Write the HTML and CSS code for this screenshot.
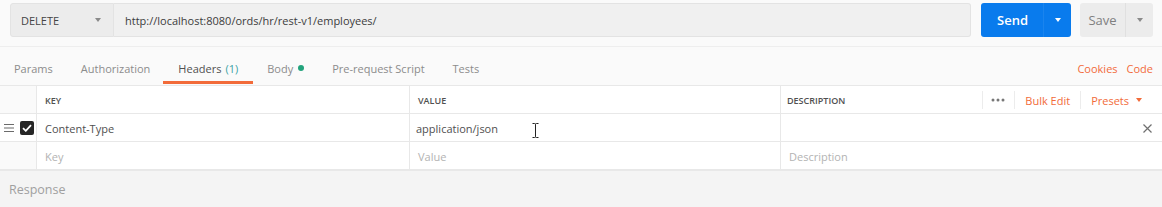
FILE: index.html
```html
<!DOCTYPE html>
<html>
<head>
<meta charset="utf-8">
<link rel="stylesheet" href="styles.css">
</head>
<body>
<div class="urlbar">
  <div class="method"><span>DELETE</span><span class="caret gray"></span></div>
  <div class="url">http://localhost:8080/ords/hr/rest-v1/employees/</div>
  <div class="send"><span class="send-label">Send</span><span class="send-drop"><span class="caret white"></span></span></div>
  <div class="save"><span class="save-label">Save</span><span class="save-drop"><span class="caret gray"></span></span></div>
</div>
<div class="tabsbar">
  <div class="tabs">
    <div class="tab">Params</div>
    <div class="tab">Authorization</div>
    <div class="tab active">Headers <span class="count">(1)</span></div>
    <div class="tab">Body <span class="dot"></span></div>
    <div class="tab">Pre-request Script</div>
    <div class="tab">Tests</div>
  </div>
  <div class="links"><span>Cookies</span><span>Code</span></div>
</div>
<div class="table">
  <div class="cell c0 head"></div>
  <div class="cell head">KEY</div>
  <div class="cell head">VALUE</div>
  <div class="cell head last desc-head">
    <span>DESCRIPTION</span>
    <div class="head-actions">
      <span class="act dots"><svg width="14" height="4" viewBox="0 0 14 4"><circle cx="2" cy="2" r="1.5" fill="#777"/><circle cx="7" cy="2" r="1.5" fill="#777"/><circle cx="12" cy="2" r="1.5" fill="#777"/></svg></span>
      <span class="act orange">Bulk Edit</span>
      <span class="act orange">Presets <span class="caret orange-caret"></span></span>
    </div>
  </div>

  <div class="cell c0 handle">
    <svg class="burger" width="10" height="8" viewBox="0 0 10 8"><path d="M0 0.5H10M0 4H10M0 7.5H10" stroke="#6b6b6b" stroke-width="1.2"/></svg>
    <span class="check"><svg width="10" height="8" viewBox="0 0 10 8"><path d="M1 4.2L3.8 6.8L9 1.2" fill="none" stroke="#fff" stroke-width="1.8"/></svg></span>
  </div>
  <div class="cell">Content-Type</div>
  <div class="cell value-cell">application/json<svg class="ibeam" width="7" height="15" viewBox="0 0 7 15"><path d="M0.5 0.5H2.5Q3.5 0.5 3.5 1.5V13.5Q3.5 14.5 2.5 14.5H0.5M6.5 0.5H4.5Q3.5 0.5 3.5 1.5M6.5 14.5H4.5Q3.5 14.5 3.5 13.5" fill="none" stroke="#222" stroke-width="1"/></svg></div>
  <div class="cell last del-cell"><svg width="9" height="9" viewBox="0 0 9 9"><path d="M0.5 0.5L8.5 8.5M8.5 0.5L0.5 8.5" stroke="#707070" stroke-width="1.2"/></svg></div>

  <div class="cell c0"></div>
  <div class="cell ph">Key</div>
  <div class="cell ph">Value</div>
  <div class="cell last ph">Description</div>
</div>
<div class="response">Response</div>
</body>
</html>
```
FILE: styles.css
```css
* { box-sizing: border-box; }
html, body { margin: 0; padding: 0; }
body {
  width: 1162px;
  height: 207px;
  overflow: hidden;
  background: #fafafa;
  font-family: "Open Sans", "Liberation Sans", sans-serif;
  font-size: 11px;
  color: #505050;
}
.urlbar {
  display: flex;
  height: 47px;
  padding: 3px 9px 9px 10px;
  border-bottom: 1px solid #eeeeee;
}
.method {
  width: 104px;
  background: #ececec;
  border: 1px solid #e3e3e3;
  border-radius: 3px 0 0 3px;
  display: flex;
  align-items: center;
  justify-content: space-between;
  padding: 0 12px 0 10px;
  color: #444;
}
.url {
  flex: 1;
  background: #f0f0f0;
  border: 1px solid #e3e3e3;
  border-left: none;
  border-radius: 0 3px 3px 0;
  display: flex;
  align-items: center;
  padding-left: 11px;
  color: #3c3c3c;
}
.caret {
  display: inline-block;
  width: 0; height: 0;
  border-left: 3.5px solid transparent;
  border-right: 3.5px solid transparent;
  border-top: 4px solid #808080;
}
.caret.white { border-top-color: #fff; }
.caret.gray { border-top-color: #8a8a8a; }
.send {
  margin-left: 10px;
  width: 90px;
  background: #097bed;
  border-radius: 3px;
  display: flex;
  color: #fff;
  font-weight: 600;
  font-size: 13px;
}
.send-label { flex: 1; display: flex; align-items: center; justify-content: center; padding-left: 1px; }
.send-drop {
  width: 28px;
  border-left: 1px solid #1a84ee;
  display: flex; align-items: center; justify-content: center;
}
.save {
  margin-left: 9px;
  width: 73px;
  background: #ececec;
  border-radius: 3px;
  display: flex;
  color: #808080;
  font-size: 13px;
}
.save-label { flex: 1; display: flex; align-items: center; justify-content: center; }
.save-drop {
  width: 28px;
  border-left: 1px solid #e0e0e0;
  display: flex; align-items: center; justify-content: center;
}
.tabsbar {
  display: flex;
  justify-content: space-between;
  align-items: stretch;
  height: 38px;
  padding-right: 9px;
}
.tabs { display: flex; }
.tab {
  padding: 0 14px;
  display: flex;
  align-items: center;
  color: #8c8c8c;
  padding-top: 8px;
  border-bottom: 4px solid transparent;
}
.tab.active {
  color: #505050;
  border-bottom: 3px solid #f26b3a;
  margin-bottom: 1px;
  padding-left: 15px; padding-right: 15px; margin-left: -1px;
}
.count { color: #3aa3a6; margin-left: 4px; }
.dot {
  display: inline-block;
  width: 6px; height: 6px;
  border-radius: 50%;
  background: #22a37c;
  margin-left: 5px;
}
.links { display: flex; gap: 9px; align-items: center; color: #f26b3a; padding-top: 5px; }
.table {
  display: grid;
  grid-template-columns: 37px 373px 371px 1fr;
  grid-auto-rows: 28px;
  background: #fff;
  border-top: 1px solid #e8e8e8;
}
.cell {
  border-right: 1px solid #e8e8e8;
  border-bottom: 1px solid #e8e8e8;
  display: flex;
  align-items: center;
  padding-left: 8px;
  padding-top: 1px;
  color: #505050;
}
.cell.last { border-right: none; }
.cell.c0 { padding: 0; background: #fafafa; }
.cell.head {
  font-size: 9px;
  font-weight: 600;
  color: #505050;
  background: #fff;
}
.cell.c0.head { background: #fafafa; }
.desc-head { justify-content: space-between; padding-right: 0; padding-left: 6px; }
.head-actions { display: flex; height: 100%; align-items: center; }
.act {
  display: flex; align-items: center;
  height: 18px;
  border-left: 1px solid #ececec;
  padding: 0 10px;
  font-size: 11px;
  font-weight: 400;
}
.act.dots { padding: 0 9px 0 8px; }
.act.orange { color: #f26b3a; }
.act:last-child { padding-right: 20px; }
.caret.orange-caret { border-top-color: #f26b3a; margin-left: 7px; border-left-width: 3.5px; border-right-width: 3.5px; border-top-width: 4px; }
.handle { display: flex; align-items: center; padding-left: 4px !important; gap: 6px; background: #fff !important; }
.check {
  width: 14px; height: 14px;
  background: #262626;
  border-radius: 2px;
  display: flex; align-items: center; justify-content: center;
}
.value-cell { padding-left: 6px; }
.ibeam { margin-left: 34px; margin-top: 4px; }
.del-cell { justify-content: flex-end; padding-right: 10px; }
.ph { color: #b3b3b3; }
.table .ph:nth-child(14) { padding-left: 9px; }
.table .ph:nth-child(15) { padding-left: 6px; }
.table .ph:nth-child(16) { padding-left: 6px; }
.response {
  height: 38px;
  background: #f4f4f4;
  border-top: 1px solid #e8e8e8;
  padding-left: 9px;
  display: flex;
  align-items: center;
  font-size: 12.5px;
  color: #a0a0a0;
}
```
